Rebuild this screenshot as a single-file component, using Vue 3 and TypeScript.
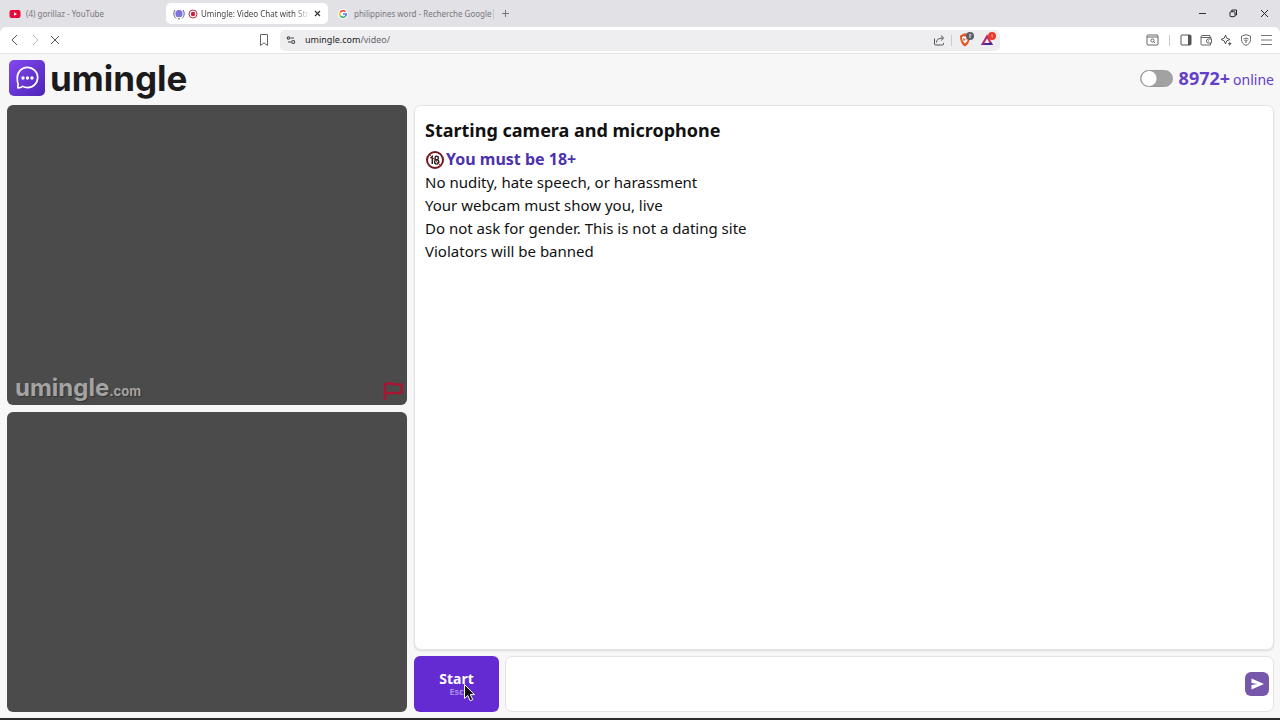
<script setup lang="ts">
import { ref } from 'vue'

const rules: string[] = [
  'No nudity, hate speech, or harassment',
  'Your webcam must show you, live',
  'Do not ask for gender. This is not a dating site',
  'Violators will be banned',
]
const onlineCount = ref(8972)
const filterOn = ref(false)
const message = ref('')
</script>

<template>
  <div class="window">
    <header class="tabs">
      <nav class="tab-list" aria-label="Tabs">
        <button class="tab tab-first" type="button">
          <svg width="12" height="12" viewBox="0 0 12 12"><rect x="0.500" y="2" width="11" height="8" rx="2" fill="#e8083c" /><path d="M5 4.300v3.400L8 6z" fill="#fff" /></svg>
          <span>(4) gorillaz - YouTube</span>
        </button>
        <div class="tab tab-active">
          <svg width="12" height="12" viewBox="0 0 12 12"><circle cx="6" cy="5.700" r="3.600" fill="#7568d8" /><path d="M2 2C.2 4.500.4 8 3 10.300M10 2c1.800 2.500 1.600 6-1 8.300M5 10.800h2" fill="none" stroke="#4a4778" stroke-width=".9" /><path d="M4 3v5.500M6 2.500v6.500M8 3v5.500" stroke="#968bea" stroke-width=".7" /></svg>
          <svg width="10" height="10" viewBox="0 0 10 10"><circle cx="5" cy="5" r="4" fill="#fff" stroke="#c9304a" stroke-width="1" /><circle cx="5" cy="5" r="2.200" fill="#c9203c" /></svg>
          <span class="active-title">Umingle: Video Chat with Stra</span>
          <button class="tab-close" type="button" aria-label="Close tab">
            <svg width="7" height="7" viewBox="0 0 7 7"><path d="M1 1l5 5M6 1L1 6" stroke="#333" stroke-width="1.200" /></svg>
          </button>
        </div>
        <button class="tab tab-search" type="button">
          <svg width="10" height="10" viewBox="0 0 10 10"><circle cx="5" cy="5" r="5" fill="#fff" /><g fill="none" stroke-width="1.500"><path d="M7.500 2.700A3.300 3.300 0 0 0 2.200 3.300" stroke="#ea4335" /><path d="M2.200 3.300a3.300 3.300 0 0 0 0 3.400" stroke="#fbbc05" /><path d="M2.200 6.700a3.300 3.300 0 0 0 5 .8" stroke="#34a853" /><path d="M7.200 7.500A3.300 3.300 0 0 0 8.300 5H5" stroke="#4285f4" /></g></svg>
          <span>philippines word - Recherche Google</span>
        </button>
        <button class="new-tab" type="button" aria-label="New tab">
          <svg width="9" height="9" viewBox="0 0 9 9"><path d="M4.500 1v7M1 4.500h7" stroke="#777" /></svg>
        </button>
      </nav>
      <div class="controls">
        <button type="button" aria-label="Minimize"><svg width="9" height="9" viewBox="0 0 9 9"><path d="M1 4.500h7" stroke="#333" /></svg></button>
        <button type="button" aria-label="Restore"><svg width="9" height="9" viewBox="0 0 9 9" fill="none" stroke="#222"><rect x="1" y="2.700" width="5" height="5" rx="1" /><path d="M2.800 2.500V1h4.700v5H6.200" /></svg></button>
        <button type="button" aria-label="Close"><svg width="9" height="9" viewBox="0 0 9 9"><path d="M1 1l7 7M8 1L1 8" stroke="#222" /></svg></button>
      </div>
    </header>

    <div class="toolbar-back">
      <div class="toolbar">
        <div class="history">
          <button type="button" aria-label="Back"><svg width="12" height="12" viewBox="0 0 12 12"><path d="M8 1L3 6l5 5" fill="none" stroke="#555" /></svg></button>
          <button type="button" aria-label="Forward"><svg width="12" height="12" viewBox="0 0 12 12"><path d="M4 1l5 5-5 5" fill="none" stroke="#bbb" /></svg></button>
          <button type="button" aria-label="Stop"><svg width="12" height="12" viewBox="0 0 12 12"><path d="M2 2l8 8M10 2l-8 8" stroke="#555" /></svg></button>
        </div>
        <div class="address-area">
          <button type="button" aria-label="Bookmark"><svg width="12" height="14" viewBox="0 0 12 14"><path d="M2.500 1.500h7v11L6 9.800l-3.500 2.700z" fill="none" stroke="#666" stroke-linejoin="round" /></svg></button>
          <div class="address">
            <svg width="10" height="10" viewBox="0 0 10 10" fill="none" stroke="#444" stroke-width="1.100"><circle cx="2.500" cy="3" r="1.200" /><path d="M4.500 3h3.500M2 7h3" /><circle cx="7.200" cy="7" r="1.500" /></svg>
            <a class="url" href="#"><span>umingle.com</span>/video/</a>
            <svg width="12" height="12" viewBox="0 0 12 12" fill="none" stroke="#555"><path d="M1.500 4.500V10q0 1 1 1h7q1 0 1-1V9M3.500 8.500q0-4.500 6.500-4.500M8 1.500L10.700 4 8 6.500" /></svg>
            <i class="divider"></i>
            <svg width="16" height="16" viewBox="0 0 16 16"><path d="M2 3.500l2-.8L5.500 1.500h3L10 2.700l2 .8-.2 3.500c-.7 4-2 5.800-4.800 7.500-2.800-1.700-4.100-3.500-4.800-7.500z" fill="#e45726" /><path d="M4 5l2-1 1 1 1-1 2 1-.7 4L7 11.500 4.700 9z" fill="#fff" /><path d="M5.500 6l1 1.500L5.800 9M8.500 6L7.700 8" stroke="#e45726" stroke-width=".7" /><circle cx="12" cy="4" r="4" fill="#5c5e66" /><path d="M11 2.500h2v1.400h-1.600v1.500h1.700" fill="none" stroke="#fff" stroke-width=".6" /></svg>
            <svg width="16" height="16" viewBox="0 0 16 16"><path d="M7 2.500L1 13h12z" fill="#d72a57" /><path d="M1 13h12L11 10H4z" fill="#4e288f" /><path d="M7 2.500l2 3.500-5 7H1z" fill="#a32c83" opacity=".65" /><path d="M7 6.500L4.400 11h5.200z" fill="#f3eef7" /><circle cx="12" cy="4" r="4" fill="#e43c2d" /><path d="M11.400 3l.8-.6v3.300" fill="none" stroke="#ffc6be" stroke-width=".7" /></svg>
          </div>
        </div>
        <div class="tools">
          <button type="button" aria-label="Search page"><svg width="13" height="12" viewBox="0 0 13 12" fill="none" stroke="#666"><rect x="1" y="1" width="11" height="10" rx="1" /><path d="M1 3h11" /><circle cx="6.500" cy="6.500" r="1.600" /><path d="M7.700 7.700L9 9" /></svg></button>
          <i class="divider"></i>
          <button type="button" aria-label="Side panel"><svg width="12" height="12" viewBox="0 0 12 12"><rect x="1" y="1" width="10" height="10" rx="1" fill="none" stroke="#555" /><path d="M8 1h3v10H8z" fill="#555" /></svg></button>
          <button type="button" aria-label="Wallet"><svg width="12" height="12" viewBox="0 0 12 12" fill="none" stroke="#666"><path d="M10 3V1.500H2Q1 1.500 1 3v7q0 1 1 1h8.500V9M1 3.500h10V5M11.500 5H8.200q-1.700 0-1.700 2t1.700 2h3.300zM8 7h1" /></svg></button>
          <button type="button" aria-label="Assistant"><svg width="12" height="12" viewBox="0 0 12 12"><path d="M5.500 1l1.200 3.200L10 5.500 6.700 6.800 5.500 10 4.200 6.800 1 5.500l3.200-1.300z" fill="none" stroke="#555" stroke-linejoin="round" /><path d="M9.800 7.500l.6 1.500 1.500.7-1.500.7-.6 1.500-.7-1.500-1.400-.7 1.400-.7z" fill="#555" /></svg></button>
          <button type="button" aria-label="VPN"><svg width="12" height="12" viewBox="0 0 12 12" fill="none" stroke="#666"><path d="M6 .7l4.500 1.500v3.500C10.500 8.500 9 10 6 11.500 3 10 1.500 8.500 1.500 5.700V2.200zM3.500 5q2.500-1.800 5 0M4.500 6.500q1.500-1 3 0" /><circle cx="6" cy="8" r=".5" /></svg></button>
          <button type="button" aria-label="Menu"><svg width="12" height="12" viewBox="0 0 12 12"><path d="M1 1.500h11M1 6h11M1 10.500h11" stroke="#777" /></svg></button>
        </div>
      </div>
    </div>

    <div class="site">
      <header class="site-header">
        <a class="brand" href="#">
          <svg width="36" height="36" viewBox="0 0 36 36">
            <defs><linearGradient id="badge" x1="0" y1="0" x2="1" y2="1"><stop offset="0" stop-color="#8448ee" /><stop offset="1" stop-color="#4c24b8" /></linearGradient></defs>
            <rect width="36" height="36" rx="5" fill="url(#badge)" />
            <path d="M9 28c-.6-1.200 0-2.200.2-3.600-1-2-.9-4.400-.9-6.400a10.200 10.200 0 1 1 10.200 9.700c-1.800 0-3.400-.4-4.800-1.300-1.200.9-2.600 1.500-4.700 1.600z" fill="none" stroke="#fff" stroke-width="1.700" stroke-linejoin="round" />
            <g fill="#fff"><circle cx="14" cy="18" r="1.700" /><circle cx="18.500" cy="18" r="1.700" /><circle cx="23" cy="18" r="1.700" /></g>
          </svg>
          <span>umingle</span>
        </a>
        <div class="online">
          <input v-model="filterOn" class="switch" type="checkbox" aria-label="Toggle" />
          <strong>{{ onlineCount }}+</strong>
          <span>online</span>
        </div>
      </header>

      <main class="content">
        <div class="videos">
          <section class="video">
            <div class="watermark">umingle<small>.com</small></div>
            <button class="report" type="button" aria-label="Report">
              <svg width="20" height="20" viewBox="0 0 20 20"><path d="M2 19V5q0-2.500 2.500-2.500H8q1.500 0 2.500.5t2.500.5H18.500V10q0 2-2 2H2" fill="none" stroke="#a91430" stroke-width="2.500" /></svg>
            </button>
          </section>
          <section class="video"></section>
        </div>
        <div class="chat">
          <section class="log">
            <h1>Starting camera and microphone</h1>
            <p class="age">
              <svg width="20" height="20" viewBox="0 0 20 20"><circle cx="10" cy="10" r="8" fill="#fff" stroke="#731a22" stroke-width="2" /><path d="M5.500 8L7.300 6.500V14" fill="none" stroke="#222" stroke-width="1.500" /><g fill="none" stroke="#222" stroke-width="1.400"><circle cx="11.700" cy="8" r="1.700" /><circle cx="11.700" cy="12" r="2.100" /></g><path d="M4.500 4.500l11 11" stroke="#b92835" stroke-width="1" /></svg>
              <strong>You must be 18+</strong>
            </p>
            <p v-for="rule in rules" :key="rule">{{ rule }}</p>
          </section>
          <form class="composer" @submit.prevent>
            <button class="start" type="button">
              <span>Start</span><small>Esc</small>
              <svg class="pointer" width="14" height="20" viewBox="0 0 14 20"><path d="M1.500 1.500v14l3.300-3 2.400 5.300 2.600-1.200-2.500-5h4.200z" fill="#111" stroke="#fff" /></svg>
            </button>
            <div class="message">
              <textarea v-model="message" aria-label="Message"></textarea>
              <button class="send" type="submit" aria-label="Send">
                <svg width="24" height="24" viewBox="0 0 24 24"><path d="M6.500 6.500L19 12 6.500 17.500V13L12.500 12 6.500 11z" fill="#fff" /></svg>
              </button>
            </div>
          </form>
        </div>
      </main>
    </div>
  </div>
</template>

<style>
body { margin: 0; }
</style>

<style scoped>
.window { display: flex; flex-direction: column; min-height: 100vh; box-sizing: border-box; border-bottom: 2px solid #292929; background: #f7f7f8; font-family: "Noto Sans", sans-serif; color: #111; }
button { border: 0; padding: 0; background: none; font-family: inherit; color: inherit; display: flex; align-items: center; justify-content: center; }
svg { display: block; flex: none; }
.tabs { display: flex; justify-content: space-between; height: 27px; background: #e2e1e6; }
.tab-list { display: flex; align-items: center; }
.tab { display: flex; align-items: center; justify-content: flex-start; box-sizing: border-box; height: 21px; font-size: 8px; line-height: 12px; color: #77777c; white-space: nowrap; }
.tab-first { width: 166px; padding-left: 9px; gap: 5px; }
.tab-active { width: 162px; padding: 0 7px; gap: 3px; border-radius: 5px; background: #fff; color: #444; }
.active-title { flex: 1; min-width: 0; overflow: hidden; mask-image: linear-gradient(90deg, #000 85%, transparent); }
.tab-close { width: 8px; height: 12px; }
.tab-search { width: 166px; padding-left: 10px; gap: 6px; border-right: 1px solid #c9c8ce; height: 10px; }
.new-tab { width: 22px; height: 20px; }
.controls { display: flex; align-items: center; }
.controls button { width: 31px; height: 27px; }
.toolbar-back { background: #e2e1e6; }
.toolbar { display: grid; grid-template-columns: 258fr 742fr 280fr; align-items: center; height: 26px; border-bottom: 1px solid #e4e4e6; border-radius: 6px 6px 0 0; background: #fff; }
.history { display: flex; gap: 8px; padding-left: 9px; }
.address-area { display: flex; align-items: center; gap: 10px; }
.address { display: flex; flex: 1; align-items: center; gap: 6px; height: 21px; padding: 0 4px 0 6px; border-radius: 5px; background: #eeeef1; }
.url { flex: 1; padding-left: 3px; font-size: 9px; line-height: 12px; color: #666; text-decoration: none; }
.url span { color: #222; }
.divider { width: 1px; height: 11px; background: #ccc; }
.tools { display: flex; align-items: center; justify-content: flex-end; gap: 8px; padding-right: 8px; }
.tools .divider { margin: 0 2px; }
.site { display: flex; flex: 1; flex-direction: column; padding: 0 6px 6px 7px; }
.site-header { display: flex; align-items: center; justify-content: space-between; height: 51px; }
.brand { display: flex; align-items: center; gap: 5px; padding-left: 2px; margin-bottom: 4px; font: 700 35px/48px Inter, sans-serif; color: #1b1b1b; text-decoration: none; }
.online { display: flex; align-items: baseline; margin-bottom: 2px; color: #6440c8; font-size: 14px; line-height: 24px; }
.online strong { margin: 0 3px 0 6px; font-size: 18px; }
.switch { appearance: none; align-self: center; box-sizing: border-box; width: 33px; height: 17px; margin: 0; border: 1px solid #999; border-radius: 9px; background: radial-gradient(circle at 8px 50%, #fff 7px, #a2a2a2 8px); }
.content { display: grid; grid-template-columns: minmax(0, 400fr) minmax(0, 860fr); flex: 1; gap: 7px; }
.videos { display: flex; flex-direction: column; gap: 7px; }
.video { display: flex; flex: 1; align-items: flex-end; justify-content: space-between; border-radius: 6px; background: #4b4b4b; }
.watermark { padding-left: 8px; font: 700 24px/28px Inter, sans-serif; color: #a3a3a3; text-shadow: 1px 1px 1px #333; }
.watermark small { font-size: 13px; }
.report { padding: 4px; }
.chat { display: flex; flex-direction: column; gap: 6px; }
.log { flex: 1; box-sizing: border-box; padding: 10px; border: 1px solid #e3e3e5; border-radius: 7px; background: #fff; box-shadow: 0 1px 2px #ddd; }
.log h1 { margin: 0 0 4px; font-size: 18px; line-height: 28px; }
.log p { margin: 0; font-size: 15px; line-height: 23px; }
.log .age { display: flex; align-items: center; gap: 1px; font-size: 16px; color: #4c32ac; }
.composer { display: flex; gap: 6px; height: 56px; }
.start { position: relative; flex-direction: column; width: 85px; border-radius: 6px; background: #652bd3; color: #fff; font-size: 14px; font-weight: 700; line-height: 15px; }
.start small { font-size: 9px; line-height: 11px; color: #a98be5; }
.pointer { position: absolute; left: 49px; top: 27px; }
.message { display: flex; flex: 1; align-items: center; box-sizing: border-box; padding-right: 4px; border: 1px solid #e3e3e5; border-radius: 7px; background: #fff; }
textarea { flex: 1; align-self: stretch; min-width: 0; padding: 8px; border: 0; outline: 0; resize: none; background: none; font: 15px/23px "Noto Sans", sans-serif; }
.send { border-radius: 6px; background: #7657ab; }
</style>
